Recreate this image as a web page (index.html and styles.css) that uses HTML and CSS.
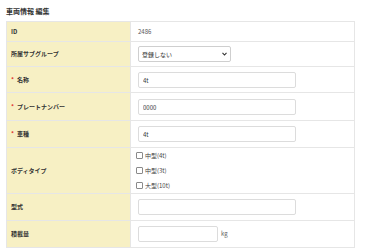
FILE: index.html
```html
<!DOCTYPE html>
<html lang="ja">
<head>
<meta charset="utf-8">
<link rel="stylesheet" href="styles.css">
</head>
<body>
<h1 class="title">車両情報 編集</h1>
<table class="form">
  <tr class="row-text">
    <th>ID</th>
    <td class="val">2486</td>
  </tr>
  <tr class="row-select">
    <th>所属サブグループ</th>
    <td>
      <span class="select-wrap">
        <select class="select"><option>登録しない</option></select>
        <svg class="chev" width="5" height="4" viewBox="0 0 5 4"><path d="M0.5 0.8 L2.5 3 L4.5 0.8" fill="none" stroke="#333" stroke-width="1.1"/></svg>
      </span>
    </td>
  </tr>
  <tr>
    <th><span class="req">*</span>名称</th>
    <td><input class="text" type="text" value="4t"></td>
  </tr>
  <tr class="row-tall">
    <th><span class="req">*</span>プレートナンバー</th>
    <td><input class="text" type="text" value="0000"></td>
  </tr>
  <tr class="row-mid">
    <th><span class="req">*</span>車種</th>
    <td><input class="text" type="text" value="4t"></td>
  </tr>
  <tr class="row-checks">
    <th>ボディタイプ</th>
    <td>
      <label class="check"><input type="checkbox" class="box">中型(4t)</label>
      <label class="check"><input type="checkbox" class="box">中型(3t)</label>
      <label class="check"><input type="checkbox" class="box">大型(10t)</label>
    </td>
  </tr>
  <tr class="row-mid">
    <th>型式</th>
    <td><input class="text" type="text" value=""></td>
  </tr>
  <tr class="row-mid">
    <th>積載量</th>
    <td><input class="text short" type="text" value=""><span class="unit">kg</span></td>
  </tr>
</table>
</body>
</html>
```
FILE: styles.css
```css
html, body {
  margin: 0;
  padding: 0;
  background: #ffffff;
}
body {
  padding: 7px 6px 0 6px;
  font-family: "Noto Sans CJK JP", "Noto Sans", sans-serif;
  color: #333333;
}
.title {
  margin: 0 0 5px 0;
  font-size: 7px;
  line-height: 9px;
  font-weight: bold;
  color: #333333;
}
.form {
  width: 349px;
  border-collapse: collapse;
  font-size: 6px;
}
.form th,
.form td {
  border: 1px solid #e6e6e6;
  padding: 5px 4px 4px 4px;
  vertical-align: middle;
  line-height: 10px;
}
.form th {
  width: 115px;
  text-align: left;
  background: #f7f0c4;
  font-weight: bold;
  color: #333333;
}
.form td {
  padding-left: 7px;
  background: #ffffff;
}
.row-text th,
.row-text td {
  padding-top: 5px;
  padding-bottom: 4px;
}
.row-select th,
.row-select td {
  padding-top: 4px;
  padding-bottom: 4px;
}
.row-tall th,
.row-tall td {
  padding-top: 6px;
  padding-bottom: 5px;
}
.row-mid th,
.row-mid td {
  padding-top: 5px;
  padding-bottom: 5px;
}
.val {
  color: #555555;
}
.req {
  color: #e03030;
  margin-right: 3px;
}
.select-wrap {
  position: relative;
  display: inline-block;
}
.select {
  appearance: none;
  -webkit-appearance: none;
  display: block;
  width: 93px;
  height: 16px;
  box-sizing: border-box;
  margin: 0;
  padding: 0 10px 0 3px;
  border: 1px solid #cfcfcf;
  border-radius: 2px;
  background: #ffffff;
  font-family: inherit;
  font-size: 6px;
  color: #333333;
}
.chev {
  position: absolute;
  right: 4px;
  top: 6px;
}
.text {
  display: block;
  width: 158px;
  height: 16px;
  box-sizing: border-box;
  margin: 0;
  padding: 0 4px;
  border: 1px solid #dcdcdc;
  border-radius: 2px;
  background: #ffffff;
  font-family: inherit;
  font-size: 6px;
  color: #333333;
  outline: none;
}
.text.short {
  display: inline-block;
  vertical-align: middle;
  width: 80px;
}
.unit {
  display: inline-block;
  vertical-align: middle;
  margin-left: 3px;
  color: #666666;
}
.row-checks td {
  padding: 0 4px 0 2px;
}
.check {
  display: flex;
  align-items: center;
  height: 15px;
  color: #444444;
}
.box {
  appearance: none;
  -webkit-appearance: none;
  width: 7px;
  height: 7px;
  box-sizing: border-box;
  margin: 0 2px 0 3px;
  border: 1px solid #8a8a8a;
  border-radius: 1px;
  background: #ffffff;
}
```
